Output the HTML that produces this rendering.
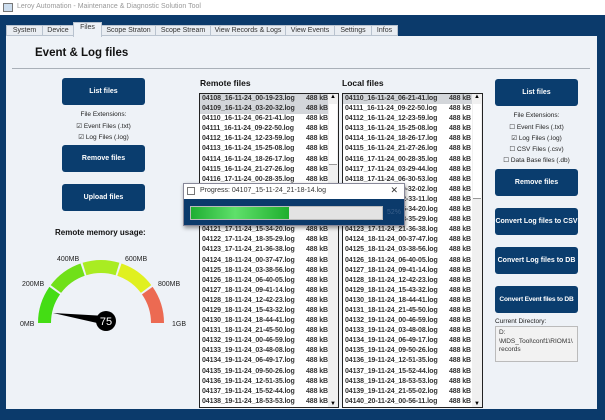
<!DOCTYPE html>
<html><head><meta charset="utf-8">
<style>
*{margin:0;padding:0;box-sizing:border-box}
body{width:605px;height:420px;overflow:hidden;background:#0b3a6b;font-family:"Liberation Sans",sans-serif;position:relative}
.abs{position:absolute}
#title{left:0;top:0;width:605px;height:15px;background:#fff;font-size:7px;color:#999;padding:3px 0 0 17px}
#title i{position:absolute;left:3px;top:3px;width:10px;height:9px;border:1px solid #777;background:#cde}
.tab{position:absolute;top:25px;height:11px;background:#e9edf2;border:1px solid #b9c3cf;font-size:7px;color:#333;text-align:center;line-height:10px}
.tab.act{top:22px;height:15px;background:#eef2f7;border-bottom:none}
#panel{left:6px;top:36px;width:591px;height:373px;background:#eef2f7}
h1{position:absolute;left:35px;top:47px;font-size:11.5px;font-weight:bold;color:#111}
#sep{left:12px;top:68px;width:578px;height:1px;background:#a9b0b8}
.btn{position:absolute;background:#0a3d6e;color:#fff;font-size:7px;font-weight:bold;text-align:center;border-radius:3px;display:flex;align-items:center;justify-content:center}
.sm{position:absolute;font-size:6.5px;color:#222;text-align:center}
.list{position:absolute;top:93px;height:315px;border:1.5px solid #222;background:#fff;overflow:hidden}
.row{height:10.1px;font-size:7px;font-weight:bold;color:#333;line-height:10px;padding-left:2px;white-space:nowrap;letter-spacing:-0.1px}
.row span{position:absolute;left:106px}
.row.sel{background:#d3d6da}
.sb{position:absolute;right:0;top:0;width:10px;height:100%;background:#f0f0f0}
.lbl{position:absolute;font-size:8.5px;font-weight:bold;color:#111}
</style></head><body>
<div id="title" class="abs"><i></i>Leroy Automation - Maintenance &amp; Diagnostic Solution Tool</div>
<div id="panel" class="abs"></div>
<div class="tab" style="left:6px;width:37px">System</div>
<div class="tab" style="left:42px;width:32px">Device</div>
<div class="tab act" style="left:73px;width:29px">Files</div>
<div class="tab" style="left:101px;width:55px">Scope Straton</div>
<div class="tab" style="left:155px;width:56px">Scope Stream</div>
<div class="tab" style="left:210px;width:76px">View Records &amp; Logs</div>
<div class="tab" style="left:285px;width:50px">View Events</div>
<div class="tab" style="left:334px;width:38px">Settings</div>
<div class="tab" style="left:371px;width:27px">Infos</div>
<h1>Event &amp; Log files</h1>
<div id="sep" class="abs"></div>

<div class="btn" style="left:62px;top:78px;width:83px;height:27px">List files</div>
<div class="sm" style="left:62px;top:111px;width:83px">File Extensions:</div>
<div class="sm" style="left:62px;top:122px;width:83px">☑ Event Files (.txt)</div>
<div class="sm" style="left:62px;top:133px;width:83px">☑ Log Files (.log)</div>
<div class="btn" style="left:62px;top:145px;width:83px;height:27px">Remove files</div>
<div class="btn" style="left:62px;top:184px;width:83px;height:27px">Upload files</div>
<div class="lbl" style="left:55px;top:228px;font-size:8px">Remote memory usage:</div>

<svg class="abs" style="left:0;top:240px" width="200" height="100">
<g fill="none" stroke-width="13">
<path d="M44.5 83 A56.5 56.5 0 0 1 54.7 50.6" stroke="#44dd14"/>
<path d="M55.9 49 A56.5 56.5 0 0 1 82.6 29.6" stroke="#70e018"/>
<path d="M84.5 29 A56.5 56.5 0 0 1 117.5 29" stroke="#a9ec22"/>
<path d="M119.4 29.6 A56.5 56.5 0 0 1 146.1 49" stroke="#e0f020"/>
<path d="M147.3 50.6 A56.5 56.5 0 0 1 157.5 83" stroke="#ec6a52"/>
</g>
<polygon points="53,73 106,76 106,85" fill="#000"/>
<circle cx="106" cy="81" r="10" fill="#000"/>
<text x="106" y="85" font-size="11" fill="#fff" text-anchor="middle" font-family="Liberation Sans">75</text>
<g font-size="7" fill="#222" font-family="Liberation Sans">
<text x="20" y="86">0MB</text><text x="22" y="46">200MB</text>
<text x="57" y="21">400MB</text><text x="125" y="21">600MB</text>
<text x="158" y="46">800MB</text><text x="172" y="86">1GB</text>
</g></svg>

<div class="lbl" style="left:200px;top:78px">Remote files</div>
<div class="lbl" style="left:342px;top:78px">Local files</div>

<div class="list" style="left:199px;width:140px">
<div class="sb"><div style="position:absolute;left:1px;top:10px;width:8px;height:61px;background:#fff;border-bottom:1px solid #999"></div><div style="position:absolute;top:0;left:2px;font-size:6px">▲</div><div style="position:absolute;bottom:0;left:2px;font-size:6px">▼</div></div>
<div class="row sel">04108_16-11-24_00-19-23.log<span>488 kB</span></div>
<div class="row sel">04109_16-11-24_03-20-32.log<span>488 kB</span></div>
<div class="row">04110_16-11-24_06-21-41.log<span>488 kB</span></div>
<div class="row">04111_16-11-24_09-22-50.log<span>488 kB</span></div>
<div class="row">04112_16-11-24_12-23-59.log<span>488 kB</span></div>
<div class="row">04113_16-11-24_15-25-08.log<span>488 kB</span></div>
<div class="row">04114_16-11-24_18-26-17.log<span>488 kB</span></div>
<div class="row">04115_16-11-24_21-27-26.log<span>488 kB</span></div>
<div class="row">04116_17-11-24_00-28-35.log<span>488 kB</span></div>
<div class="row">04117_17-11-24_03-29-44.log<span>488 kB</span></div>
<div class="row">04118_17-11-24_06-30-53.log<span>488 kB</span></div>
<div class="row">04119_17-11-24_09-32-02.log<span>488 kB</span></div>
<div class="row">04120_17-11-24_12-33-11.log<span>488 kB</span></div>
<div class="row">04121_17-11-24_15-34-20.log<span>488 kB</span></div>
<div class="row">04122_17-11-24_18-35-29.log<span>488 kB</span></div>
<div class="row">04123_17-11-24_21-36-38.log<span>488 kB</span></div>
<div class="row">04124_18-11-24_00-37-47.log<span>488 kB</span></div>
<div class="row">04125_18-11-24_03-38-56.log<span>488 kB</span></div>
<div class="row">04126_18-11-24_06-40-05.log<span>488 kB</span></div>
<div class="row">04127_18-11-24_09-41-14.log<span>488 kB</span></div>
<div class="row">04128_18-11-24_12-42-23.log<span>488 kB</span></div>
<div class="row">04129_18-11-24_15-43-32.log<span>488 kB</span></div>
<div class="row">04130_18-11-24_18-44-41.log<span>488 kB</span></div>
<div class="row">04131_18-11-24_21-45-50.log<span>488 kB</span></div>
<div class="row">04132_19-11-24_00-46-59.log<span>488 kB</span></div>
<div class="row">04133_19-11-24_03-48-08.log<span>488 kB</span></div>
<div class="row">04134_19-11-24_06-49-17.log<span>488 kB</span></div>
<div class="row">04135_19-11-24_09-50-26.log<span>488 kB</span></div>
<div class="row">04136_19-11-24_12-51-35.log<span>488 kB</span></div>
<div class="row">04137_19-11-24_15-52-44.log<span>488 kB</span></div>
<div class="row">04138_19-11-24_18-53-53.log<span>488 kB</span></div>
</div>

<div class="list" style="left:342px;width:141px">
<div class="sb"><div style="position:absolute;left:1px;top:10px;width:8px;height:95px;background:#fff;border-bottom:1px solid #999"></div><div style="position:absolute;top:0;left:2px;font-size:6px">▲</div><div style="position:absolute;bottom:0;left:2px;font-size:6px">▼</div></div>
<div class="row sel">04110_16-11-24_06-21-41.log<span>488 kB</span></div>
<div class="row">04111_16-11-24_09-22-50.log<span>488 kB</span></div>
<div class="row">04112_16-11-24_12-23-59.log<span>488 kB</span></div>
<div class="row">04113_16-11-24_15-25-08.log<span>488 kB</span></div>
<div class="row">04114_16-11-24_18-26-17.log<span>488 kB</span></div>
<div class="row">04115_16-11-24_21-27-26.log<span>488 kB</span></div>
<div class="row">04116_17-11-24_00-28-35.log<span>488 kB</span></div>
<div class="row">04117_17-11-24_03-29-44.log<span>488 kB</span></div>
<div class="row">04118_17-11-24_06-30-53.log<span>488 kB</span></div>
<div class="row">04119_17-11-24_09-32-02.log<span>488 kB</span></div>
<div class="row">04120_17-11-24_12-33-11.log<span>488 kB</span></div>
<div class="row">04121_17-11-24_15-34-20.log<span>488 kB</span></div>
<div class="row">04122_17-11-24_18-35-29.log<span>488 kB</span></div>
<div class="row">04123_17-11-24_21-36-38.log<span>488 kB</span></div>
<div class="row">04124_18-11-24_00-37-47.log<span>488 kB</span></div>
<div class="row">04125_18-11-24_03-38-56.log<span>488 kB</span></div>
<div class="row">04126_18-11-24_06-40-05.log<span>488 kB</span></div>
<div class="row">04127_18-11-24_09-41-14.log<span>488 kB</span></div>
<div class="row">04128_18-11-24_12-42-23.log<span>488 kB</span></div>
<div class="row">04129_18-11-24_15-43-32.log<span>488 kB</span></div>
<div class="row">04130_18-11-24_18-44-41.log<span>488 kB</span></div>
<div class="row">04131_18-11-24_21-45-50.log<span>488 kB</span></div>
<div class="row">04132_19-11-24_00-46-59.log<span>488 kB</span></div>
<div class="row">04133_19-11-24_03-48-08.log<span>488 kB</span></div>
<div class="row">04134_19-11-24_06-49-17.log<span>488 kB</span></div>
<div class="row">04135_19-11-24_09-50-26.log<span>488 kB</span></div>
<div class="row">04136_19-11-24_12-51-35.log<span>488 kB</span></div>
<div class="row">04137_19-11-24_15-52-44.log<span>488 kB</span></div>
<div class="row">04138_19-11-24_18-53-53.log<span>488 kB</span></div>
<div class="row">04139_19-11-24_21-55-02.log<span>488 kB</span></div>
<div class="row">04140_20-11-24_00-56-11.log<span>488 kB</span></div>
</div>

<div class="btn" style="left:495px;top:79px;width:83px;height:27px">List files</div>
<div class="sm" style="left:490px;top:112px;width:93px">File Extensions:</div>
<div class="sm" style="left:490px;top:123px;width:93px">☐ Event Files (.txt)</div>
<div class="sm" style="left:490px;top:134px;width:93px">☑ Log Files (.log)</div>
<div class="sm" style="left:490px;top:145px;width:93px">☐ CSV Files (.csv)</div>
<div class="sm" style="left:490px;top:156px;width:93px">☐ Data Base files (.db)</div>
<div class="btn" style="left:495px;top:169px;width:83px;height:27px">Remove files</div>
<div class="btn" style="left:495px;top:208px;width:83px;height:27px">Convert Log files to CSV</div>
<div class="btn" style="left:495px;top:247px;width:83px;height:27px">Convert Log files to DB</div>
<div class="btn" style="left:495px;top:286px;width:83px;height:27px;font-size:6.6px;letter-spacing:-0.2px">Convert Event files to DB</div>
<div class="sm" style="left:495px;top:318px;text-align:left">Current Directory:</div>
<div class="abs" style="left:495px;top:326px;width:83px;height:36px;background:#f2f2f2;border:1px solid #bbb;font-size:6.5px;color:#333;padding:2px 3px;line-height:8.5px">D:<br>\MDS_Tool\conf1\RIOM1\<br>records</div>

<div class="abs" style="left:183px;top:183px;width:222px;height:43px;background:#0b3a6b;border:1px solid #889;box-shadow:1px 2px 4px rgba(0,0,0,.4)">
<div style="height:15px;background:#fff;font-size:7px;color:#333;padding:3px 0 0 16px;position:relative"><i style="position:absolute;left:3px;top:3px;width:8px;height:8px;border:1px solid #777"></i>Progress: 04107_15-11-24_21-18-14.log<span style="position:absolute;right:6px;top:1px;font-size:9px">✕</span></div>
<div style="position:absolute;left:6px;top:22px;width:193px;height:14px;background:#e3e3e3;border:1px solid #bbb">
<div style="width:98px;height:100%;background:linear-gradient(90deg,#1fae32,#5fe06a 45%,#1faf2e)"></div></div>
<div style="position:absolute;left:203px;top:25px;font-size:7px;color:#3a5f8a">52%</div>
</div>
</body></html>
